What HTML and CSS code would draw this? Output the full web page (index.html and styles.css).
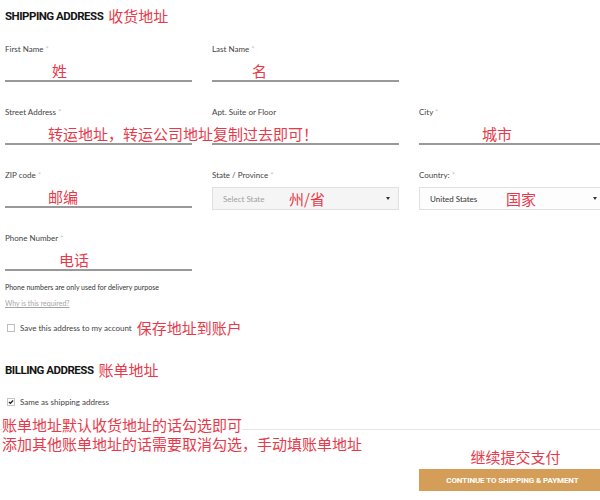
FILE: index.html
```html
<!DOCTYPE html>
<html>
<head>
<meta charset="utf-8">
<link rel="stylesheet" href="styles.css">
</head>
<body>
<div class="page">
  <h2 class="section-title">SHIPPING ADDRESS <span class="note">收货地址</span></h2>
  <div class="grid">
    <div class="field">
      <div class="label">First Name <span class="req">*</span></div>
      <div class="input"><span class="note n-first">姓</span></div>
    </div>
    <div class="field">
      <div class="label">Last Name <span class="req">*</span></div>
      <div class="input"><span class="note n-last">名</span></div>
    </div>
    <div class="field empty"></div>

    <div class="field">
      <div class="label">Street Address <span class="req">*</span></div>
      <div class="input"><span class="note n-street">转运地址，转运公司地址复制过去即可！</span></div>
    </div>
    <div class="field">
      <div class="label">Apt. Suite or Floor</div>
      <div class="input"></div>
    </div>
    <div class="field">
      <div class="label">City <span class="req">*</span></div>
      <div class="input"><span class="note n-city">城市</span></div>
    </div>

    <div class="field">
      <div class="label">ZIP code <span class="req">*</span></div>
      <div class="input"><span class="note n-zip">邮编</span></div>
    </div>
    <div class="field">
      <div class="label">State / Province <span class="req">*</span></div>
      <div class="select-wrap">
        <div class="select grey">
          <span class="sel-text placeholder st">Select State</span>
          <span class="note">州/省</span>
          <span class="caret"></span>
        </div>
      </div>
    </div>
    <div class="field">
      <div class="label">Country: <span class="req">*</span></div>
      <div class="select-wrap">
        <div class="select">
          <span class="sel-text ct">United States</span>
          <span class="note">国家</span>
          <span class="caret"></span>
        </div>
      </div>
    </div>

    <div class="field">
      <div class="label">Phone Number <span class="req">*</span></div>
      <div class="input"><span class="note n-phone">电话</span></div>
    </div>
  </div>

  <p class="hint">Phone numbers are only used for delivery purpose</p>
  <p class="why">Why is this required?</p>

  <div class="check-row save-row">
    <span class="box"></span>
    <span class="check-label">Save this address to my account</span>
    <span class="note n-save">保存地址到账户</span>
  </div>

  <h2 class="section-title billing">BILLING ADDRESS <span class="note">账单地址</span></h2>

  <div class="check-row same-row">
    <svg class="box-svg" width="8" height="8" viewBox="0 0 8 8"><rect x="0.5" y="0.5" width="7" height="7" fill="#fff" stroke="#c4c4c4"/><path d="M1.9 3.9 L3.4 5.3 L6.1 2.5" fill="none" stroke="#222" stroke-width="1.3"/></svg>
    <span class="check-label">Same as shipping address</span>
  </div>

  <div class="footer">
    <div class="note-block">
      <span class="note">账单地址默认收货地址的话勾选即可</span><br>
      <span class="note">添加其他账单地址的话需要取消勾选，手动填账单地址</span>
    </div>
    <div class="footer-grid">
      <div class="cta">
        <span class="note">继续提交支付</span>
        <button class="btn">CONTINUE TO SHIPPING &amp; PAYMENT</button>
      </div>
    </div>
  </div>
</div>
</body>
</html>
```
FILE: styles.css
```css
html, body {
  margin: 0;
  background: #fff;
  overflow: hidden;
}
body {
  font-family: Lato, "Noto Sans CJK SC", sans-serif;
  color: #333;
}
.page {
  padding: 8px 0 0 5px;
  width: 620px;
}
.section-title {
  margin: 0;
  display: flex;
  align-items: center;
  font-family: Roboto, "Noto Sans CJK SC", sans-serif;
  font-weight: 700;
  font-size: 11.5px;
  line-height: 16px;
  letter-spacing: -0.5px;
  color: #151515;
  height: 16px;
}
.note {
  font-family: "Noto Sans CJK SC", sans-serif;
  font-weight: 400;
  font-size: 15px;
  letter-spacing: 0;
  color: #e8394a;
  white-space: nowrap;
}
.section-title .note {
  margin-left: 5px;
  line-height: 16px;
}
.grid {
  display: grid;
  grid-template-columns: repeat(3, 187px);
  column-gap: 20px;
  row-gap: 24px;
  margin-top: 19px;
}
.label {
  font-size: 8px;
  line-height: 12px;
  color: #444;
  white-space: nowrap;
}
.req {
  color: #c8c8c8;
}
.input {
  height: 27px;
  box-sizing: border-box;
  border-bottom: 2px solid #999;
  display: flex;
  align-items: flex-end;
}
.input .note {
  line-height: 18px;
}
.n-first { margin-left: 47px; }
.n-last { margin-left: 40px; }
.n-street { margin-left: 43px; }
.n-city { margin-left: 63px; }
.n-zip { margin-left: 43px; }
.n-phone { margin-left: 54px; }

.select-wrap {
  height: 27px;
  box-sizing: border-box;
  padding-top: 6px;
}
.select {
  height: 23px;
  box-sizing: border-box;
  border: 1px solid #e0e0e0;
  background: #fdfdfd;
  display: flex;
  align-items: center;
  padding: 0 8px 0 10px;
}
.select.grey {
  background: #f5f5f5;
}
.select .note {
  line-height: 18px;
}
.sel-text {
  font-size: 8px;
  color: #333;
  white-space: nowrap;
}
.sel-text.placeholder {
  color: #a0a0a0;
}
.sel-text.st { width: 66px; }
.sel-text.ct { width: 76px; }
.caret {
  margin-left: auto;
  width: 0;
  height: 0;
  border-left: 2.5px solid transparent;
  border-right: 2.5px solid transparent;
  border-top: 3px solid #333;
}

.hint {
  margin: 11px 0 0;
  font-size: 7px;
  line-height: 10px;
  color: #333;
}
.why {
  margin: 6px 0 0;
  font-size: 7px;
  line-height: 10px;
  color: #a5a5a5;
  text-decoration: underline;
}
.check-row {
  display: flex;
  align-items: center;
  height: 16px;
}
.save-row {
  margin-top: 12px;
}
.box {
  width: 8px;
  height: 8px;
  box-sizing: border-box;
  border: 1px solid #bdbdbd;
  margin-left: 2px;
  background: #fff;
}
.box-svg {
  margin-left: 2px;
  display: block;
}
.check-label {
  margin-left: 5px;
  font-size: 8px;
  color: #444;
  white-space: nowrap;
}
.n-save {
  margin-left: 5px;
  line-height: 16px;
}
.billing {
  margin-top: 26px;
}
.same-row {
  margin-top: 16px;
}
.footer {
  position: relative;
  margin-top: 19px;
  margin-left: -5px;
  padding-left: 5px;
  border-top: 1px solid #e6e6e6;
}
.note-block {
  position: absolute;
  left: 2px;
  top: -15px;
  line-height: 19px;
}
.note-block .note {
  background: #fff;
}
.footer-grid {
  display: grid;
  grid-template-columns: repeat(3, 187px);
  column-gap: 20px;
  padding-top: 17px;
}
.cta {
  grid-column: 3;
  display: flex;
  flex-direction: column;
  align-items: center;
}
.cta .note {
  line-height: 20px;
  margin-left: 6px;
}
.btn {
  margin-top: 2px;
  width: 100%;
  height: 22px;
  border: 0;
  padding: 0;
  background: #d49e58;
  color: #fff;
  font-family: "Liberation Sans Narrow", Roboto, sans-serif;
  font-weight: 700;
  font-size: 8px;
  letter-spacing: -0.1px;
}
```
